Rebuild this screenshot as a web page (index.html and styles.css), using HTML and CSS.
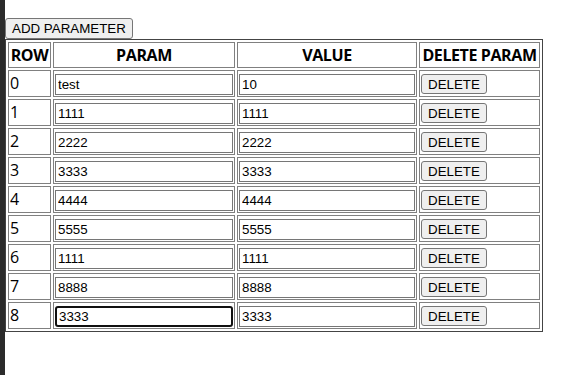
FILE: index.html
```html
<!DOCTYPE html>
<html lang="en">
<head>
    <meta charset="UTF-8">
    <meta name="viewport" content="width=device-width, initial-scale=1.0">
    <title>Parameters</title>
    <link rel="stylesheet" href="styles.css">
</head>
<body>
    <div class="strip"></div>
    <div class="main">
        <div class="toolbar">
            <button class="btn">ADD PARAMETER</button>
        </div>
        <table class="params">
            <colgroup>
                <col class="c-row">
                <col class="c-param">
                <col class="c-value">
                <col class="c-del">
            </colgroup>
            <thead>
                <tr>
                    <th>ROW</th>
                    <th>PARAM</th>
                    <th>VALUE</th>
                    <th>DELETE PARAM</th>
                </tr>
            </thead>
            <tbody>
                <tr><td>0</td><td><input class="field" value="test"></td><td><input class="field" value="10"></td><td><button class="btn">DELETE</button></td></tr>
                <tr><td>1</td><td><input class="field" value="1111"></td><td><input class="field" value="1111"></td><td><button class="btn">DELETE</button></td></tr>
                <tr><td>2</td><td><input class="field" value="2222"></td><td><input class="field" value="2222"></td><td><button class="btn">DELETE</button></td></tr>
                <tr><td>3</td><td><input class="field" value="3333"></td><td><input class="field" value="3333"></td><td><button class="btn">DELETE</button></td></tr>
                <tr><td>4</td><td><input class="field" value="4444"></td><td><input class="field" value="4444"></td><td><button class="btn">DELETE</button></td></tr>
                <tr><td>5</td><td><input class="field" value="5555"></td><td><input class="field" value="5555"></td><td><button class="btn">DELETE</button></td></tr>
                <tr><td>6</td><td><input class="field" value="1111"></td><td><input class="field" value="1111"></td><td><button class="btn">DELETE</button></td></tr>
                <tr><td>7</td><td><input class="field" value="8888"></td><td><input class="field" value="8888"></td><td><button class="btn">DELETE</button></td></tr>
                <tr><td>8</td><td><input class="field focused" value="3333"></td><td><input class="field" value="3333"></td><td><button class="btn">DELETE</button></td></tr>
            </tbody>
        </table>
    </div>
</body>
</html>
```

FILE: styles.css
```css
body {
    margin: 0;
    display: flex;
    min-height: 100vh;
    font-family: "Open Sans", "Noto Sans", sans-serif;
    font-size: 16px;
    color: #000;
    background: #fff;
}
.strip {
    width: 5px;
    background: #2b2b2b;
    flex-shrink: 0;
}
.main {
    padding-top: 18px;
}
.toolbar {
    display: flex;
}
.btn {
    font-family: Arial, "Liberation Sans", sans-serif;
    font-size: 13.333px;
    color: #000;
    background: #efefef;
    border: 1px solid #767676;
    border-radius: 3px;
    padding: 1px 6px;
    height: 21px;
}
.params {
    table-layout: fixed;
    border-collapse: separate;
    border-spacing: 2px;
    border: 1px solid #444;
    width: 537px;
}
.c-row { width: 43px; }
.c-param { width: 182px; }
.c-value { width: 180px; }
.c-del { width: 121px; }
.params th,
.params td {
    border: 1px solid #808080;
    padding: 1px;
}
.params th {
    height: 22px;
    line-height: 22px;
    font-weight: 700;
    text-align: center;
    white-space: nowrap;
    letter-spacing: -0.4px;
}
.params td {
    height: 23px;
    line-height: 21px;
    text-align: left;
    vertical-align: middle;
}
.field {
    box-sizing: border-box;
    width: 100%;
    height: 21px;
    margin: 0;
    padding: 1px 2px;
    font-family: Arial, "Liberation Sans", sans-serif;
    font-size: 13.333px;
    color: #000;
    border: 1px solid #767676;
    outline: 1px solid #fff;
    vertical-align: middle;
}
.field.focused {
    border: 2px solid #101010;
    border-radius: 3px;
    outline: none;
}
.params td .btn {
    vertical-align: middle;
    height: 20px;
    padding: 0 6px;
}
```
